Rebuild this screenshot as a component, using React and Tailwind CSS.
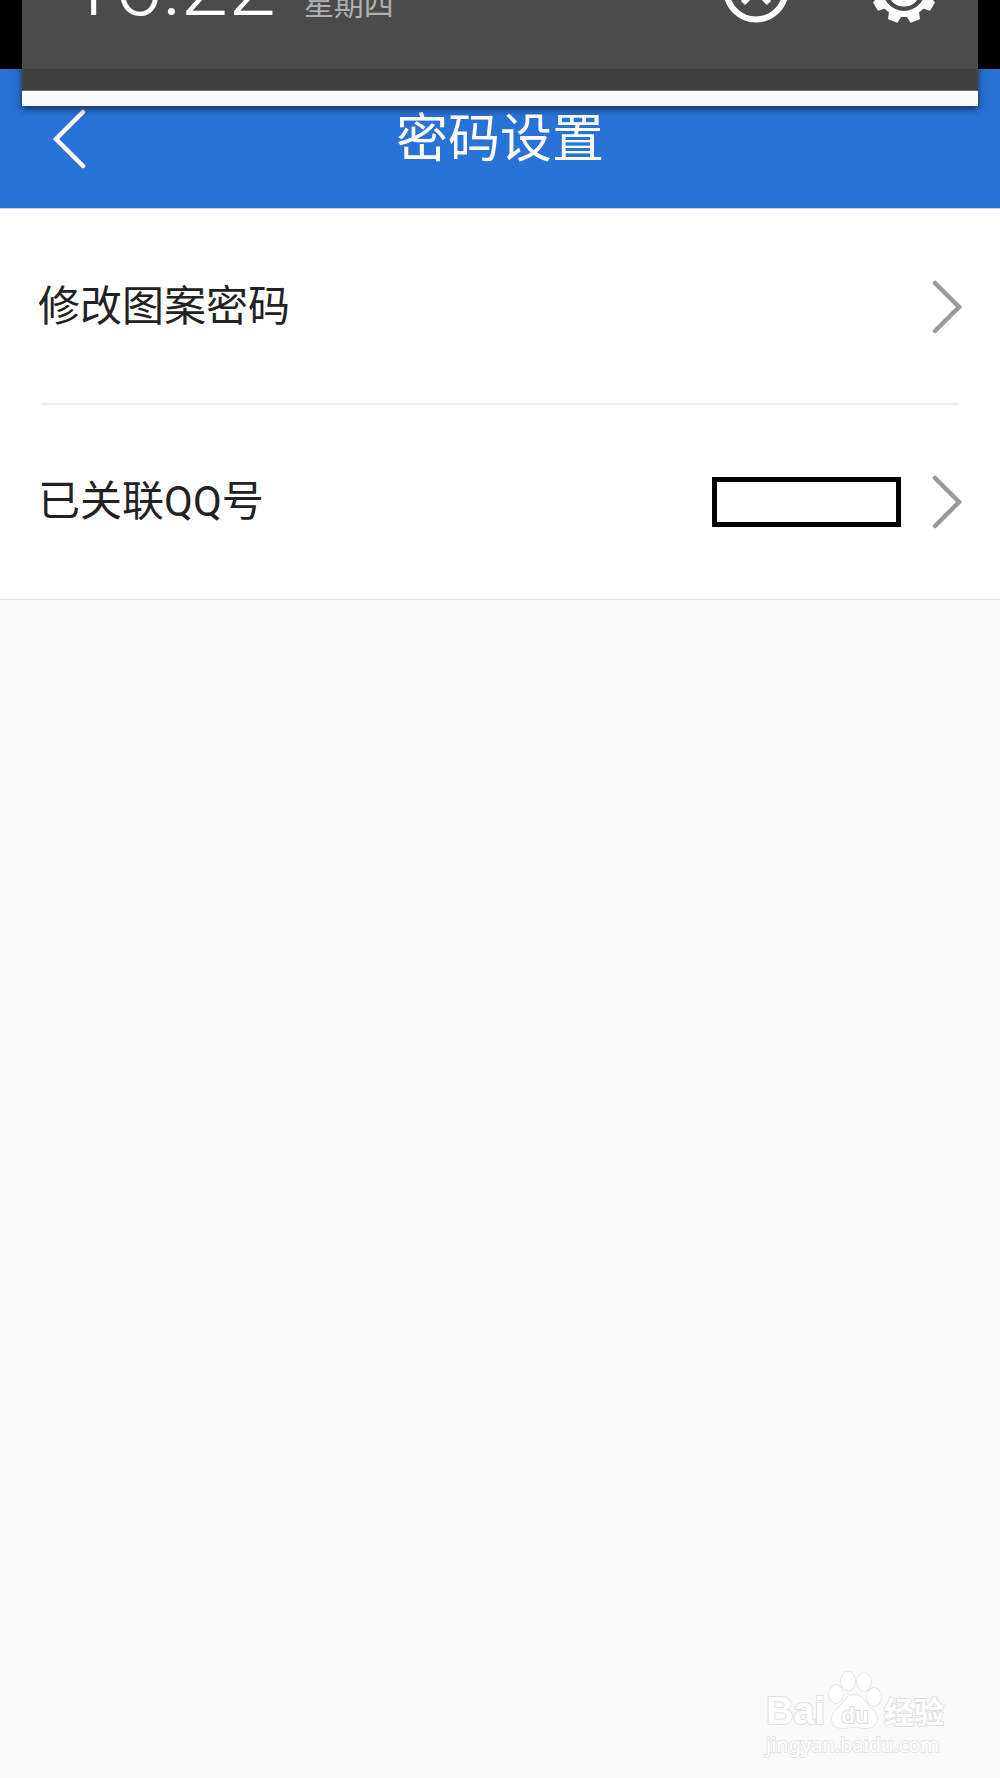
import React from "react";

const teeth = [20, 60, 100, 140, 180, 220, 260, 300, 340];

const CloseCircleIcon = () => (
  <svg viewBox="0 0 72 72" className="size-[72px]" fill="none" stroke="#fff" aria-hidden="true">
    <circle cx="36" cy="36" r="29.5" strokeWidth="6" />
    <path d="M23 23 49 49M49 23 23 49" strokeWidth="6" />
  </svg>
);

const GearIcon = () => (
  <svg viewBox="0 0 72 72" className="size-[72px]" aria-hidden="true">
    {teeth.map((angle) => (
      <path
        key={angle}
        d="M29 60h14l-2 9h-10z"
        fill="#fff"
        transform={`rotate(${angle} 36 36)`}
      />
    ))}
    <circle cx="36" cy="36" r="24" fill="none" stroke="#fff" strokeWidth="6" />
    <circle cx="36" cy="36" r="13" fill="none" stroke="#fff" strokeWidth="7" />
  </svg>
);

const ChevronRight = () => (
  <svg viewBox="0 0 30 54" className="h-[54px] w-[30px] shrink-0" fill="none" aria-hidden="true">
    <path
      d="M3 3 27 27 3 51"
      stroke="#9a9a9a"
      strokeWidth="4.5"
      strokeLinecap="round"
    />
  </svg>
);

const NotificationShade = () => (
  <div className="absolute inset-x-[22px] top-0 bg-[#4b4b4b] shadow-[0_3px_8px_rgba(0,0,0,0.6)]">
    <div className="flex h-[69px] flex-col">
      <div className="-mt-[54px] flex h-[80px] shrink-0 items-baseline pr-[38px] pl-[45px] text-white">
        <time className="text-[86px] leading-[80px] font-light">16:22</time>
        <span className="ml-[28px] text-[30px] text-[#b0b0b0]">星期四</span>
        <div className="ml-auto flex gap-[76px] self-end">
          <button type="button" aria-label="关闭">
            <CloseCircleIcon />
          </button>
          <button type="button" aria-label="设置">
            <GearIcon />
          </button>
        </div>
      </div>
    </div>
    <div className="h-[22px] border-b border-[#6c6c6c] bg-[#404040]" />
    <div className="h-[15px] bg-[#fafafa]" />
  </div>
);

const Watermark = () => (
  <footer className="mt-auto flex flex-col items-end pr-[54px] pb-[18px]">
    <div className="w-[180px] text-white">
      <div className="flex h-[60px] items-end gap-[2px] [-webkit-text-stroke:2px_#e0e0e0] [paint-order:stroke_fill]">
        <span className="w-[60px] font-['Liberation_Sans'] text-[38px] leading-[38px] font-bold">
          Bai
        </span>
        <svg viewBox="0 0 54 60" className="h-[60px] w-[54px]" aria-label="du">
          <g fill="#fff" stroke="#e0e0e0" strokeWidth="1.5">
            <ellipse cx="8" cy="24" rx="7" ry="9" />
            <ellipse cx="20" cy="11" rx="7" ry="9.5" />
            <ellipse cx="36" cy="12" rx="7" ry="9" />
            <ellipse cx="46" cy="27" rx="7" ry="9" />
            <path d="M26 25c-6 0-9 4-12 9-4 5-10 8-10 15 0 6 4 9 10 9 5 0 8-1 12-1s8 1 13 1c6 0 10-4 10-10 0-7-6-9-10-14-4-6-7-9-13-9z" />
          </g>
          <text
            x="27"
            y="53"
            textAnchor="middle"
            fontSize="22"
            fill="#fff"
            stroke="#dcdcdc"
            strokeWidth="2"
            className="font-['Liberation_Sans'] font-bold"
          >
            du
          </text>
        </svg>
        <span className="text-[30px] leading-[34px] font-bold">经验</span>
      </div>
      <p className="font-['Noto_Sans'] text-[20px] leading-[30px] [-webkit-text-stroke:2px_#e6e6e6] [paint-order:stroke_fill]">
        jingyan.baidu.com
      </p>
    </div>
  </footer>
);

const App = () => {
  return (
    <div className="relative flex min-h-screen flex-col bg-[#fafafa] font-[Roboto,'Noto_Sans_CJK_SC',sans-serif]">
      <div className="h-[69px] bg-black" />
      <header className="grid h-[140px] grid-cols-[1fr_auto_1fr] items-center border-b border-[#c3cfe2] bg-[#2972d6] px-[52px] text-white">
        <button type="button" aria-label="返回" className="justify-self-start">
          <svg viewBox="0 0 34 60" className="h-[60px] w-[34px]" fill="none" aria-hidden="true">
            <path d="M31 3 4 30 31 57" stroke="#fff" strokeWidth="4.5" strokeLinecap="round" />
          </svg>
        </button>
        <h1 className="pt-[2px] text-[52px] leading-[60px]">密码设置</h1>
      </header>
      <NotificationShade />

      <main className="border-b border-[#e4e4e4] bg-white text-[42px] leading-[60px] text-[#222]">
        <a href="#pattern" className="flex h-[194px] items-center justify-between pt-[2px] pr-[38px] pl-[38px]">
          修改图案密码
          <ChevronRight />
        </a>
        <hr className="mx-[41px] border-t-2 border-[#ededed]" />
        <a href="#qq" className="flex h-[194px] items-center pr-[38px] pl-[38px]">
          已关联QQ号
          <span className="mr-[31px] ml-auto h-[50px] w-[189px] border-[5px] border-black" />
          <ChevronRight />
        </a>
      </main>

      <Watermark />
    </div>
  );
};

export default App;
